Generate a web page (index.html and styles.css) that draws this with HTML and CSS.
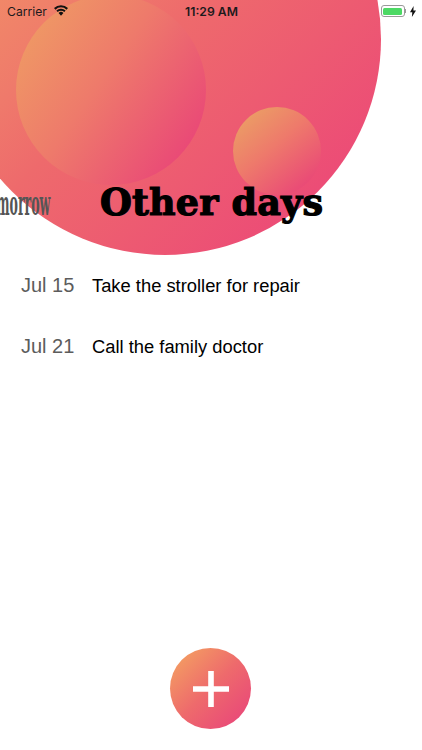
FILE: index.html
```html
<!DOCTYPE html>
<html lang="en">
<head>
<meta charset="utf-8">
<title>Other days</title>
<link rel="stylesheet" href="styles.css">
</head>
<body>
<main class="screen">
  <div class="blob" aria-hidden="true">
    <div class="bubble bubble-large"></div>
    <div class="bubble bubble-small"></div>
  </div>
  <header class="status">
    <div class="status-left">
      <span>Carrier</span>
      <svg class="wifi" viewBox="0 0 16 12"><path d="M8 12 5.2 8.9a3.9 3.9 0 0 1 5.6 0ZM4.2 7.8 2.7 6.1a7.6 7.6 0 0 1 10.6 0l-1.5 1.7a5.4 5.4 0 0 0-7.6 0ZM1.7 5 0 3.2a11.4 11.4 0 0 1 16 0L14.3 5a9 9 0 0 0-12.6 0Z"/></svg>
    </div>
    <div class="status-time">11:29 AM</div>
    <div class="status-right">
      <span class="battery"><span class="battery-fill"></span></span>
      <span class="battery-cap"></span>
      <svg class="bolt" viewBox="0 0 6 11"><path d="M3.6 0 0 6.2h2.3L1.9 11 6 4.4H3.4Z"/></svg>
    </div>
  </header>
  <section class="titles">
    <span class="title-prev">morrow</span>
    <h1 class="title">Other days</h1>
  </section>
  <ul class="tasks">
    <li class="task"><span class="task-date">Jul 15</span><span class="task-name">Take the stroller for repair</span></li>
    <li class="task"><span class="task-date">Jul 21</span><span class="task-name">Call the family doctor</span></li>
  </ul>
  <button class="fab" aria-label="Add">
    <svg viewBox="0 0 36 36"><path d="M15.2 0h5.6v15.2H36v5.6H20.8V36h-5.6V20.8H0v-5.6h15.2Z"/></svg>
  </button>
</main>
</body>
</html>
```
FILE: styles.css
```css
* { box-sizing: border-box; }
html, body { margin: 0; padding: 0; background: #fff; }
.screen {
  position: relative;
  width: 422px;
  height: 750px;
  overflow: hidden;
  display: flex;
  flex-direction: column;
  font-family: "Liberation Sans", Arial, sans-serif;
  color: #000;
}
.blob {
  position: absolute;
  left: -51px;
  top: -177px;
  width: 432px;
  height: 432px;
  border-radius: 50%;
  background: linear-gradient(135deg, #f5a561 0%, #ef7a6b 38%, #ee6a6c 50%, #ec4a77 88%);
}
.bubble { position: absolute; border-radius: 50%; }
.bubble-large {
  left: 67px;
  top: 172px;
  width: 190px;
  height: 190px;
  background: linear-gradient(125deg, #ef9b64 8%, #ee7a6b 45%, #e94378 92%);
}
.bubble-small {
  left: 284px;
  top: 284px;
  width: 88px;
  height: 88px;
  background: linear-gradient(140deg, #eb9e65 10%, #ee7a6b 45%, #e94378 92%);
}
.status {
  position: relative;
  height: 22px;
  display: grid;
  grid-template-columns: 1fr auto 1fr;
  align-items: center;
  padding: 0 6px 0 7px;
  font-family: Inter, "Liberation Sans", sans-serif;
  font-size: 12.2px;
  color: #1c1a1c;
}
.status-left { display: flex; align-items: center; gap: 7px; }
.wifi { width: 14px; height: 11px; fill: #111; margin-top: -1px; }
.status-time { font-weight: 600; font-size: 12.2px; }
.status-right { display: flex; align-items: center; justify-content: flex-end; }
.battery {
  width: 24px;
  height: 12px;
  padding: 1.5px;
  border: 1px solid #9a9a9a;
  border-radius: 3px;
  display: flex;
}
.battery-fill { flex: 1; background: #4cd964; border-radius: 1.5px; }
.battery-cap { width: 1.5px; height: 4px; background: #9a9a9a; margin-right: 4px; }
.bolt { width: 6px; height: 11px; fill: #111; }
.titles {
  position: relative;
  height: 62px;
  margin-top: 150px;
  display: flex;
  align-items: center;
}
.title-prev {
  position: absolute;
  right: 372px;
  top: 9px;
  font-family: "DejaVu Serif", serif;
  font-weight: 700;
  font-size: 34px;
  line-height: 44px;
  color: #555;
  transform: scaleX(0.37);
  transform-origin: right center;
  white-space: nowrap;
}
.title {
  margin: 0 0 0 100px;
  font-family: "DejaVu Serif", serif;
  font-weight: 700;
  font-size: 36.5px;
  line-height: 46px;
  letter-spacing: 0.2px;
  white-space: nowrap;
  -webkit-text-stroke: 1.2px #000;
}
.tasks {
  position: relative;
  list-style: none;
  margin: 40px 0 0;
  padding: 0 0 0 21px;
  display: flex;
  flex-direction: column;
  gap: 38px;
}
.task { display: flex; align-items: center; height: 23px; font-size: 18.35px; }
.task-date { width: 71px; font-size: 20px; color: #5c5c5c; }
.task-name { color: #000; }
.fab {
  position: absolute;
  left: 170px;
  top: 648px;
  width: 81px;
  height: 81px;
  padding: 0;
  border: 0;
  border-radius: 50%;
  background: linear-gradient(135deg, #f4a261 5%, #ee6a6c 50%, #e8407c 100%);
  display: flex;
  align-items: center;
  justify-content: center;
}
.fab svg { width: 36px; height: 36px; fill: #fff; }
```
